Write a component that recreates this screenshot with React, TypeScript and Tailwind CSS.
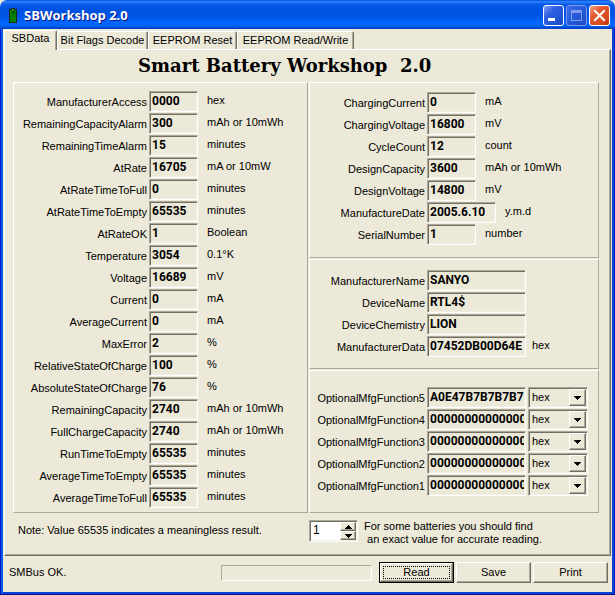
import { useState } from 'react';
import type { ReactNode } from 'react';

interface FieldDef {
  name: string;
  value: string;
  unit?: string;
  size?: 'short' | 'date' | 'long';
}

const measured: FieldDef[] = [
  { name: 'ManufacturerAccess', value: '0000', unit: 'hex' },
  { name: 'RemainingCapacityAlarm', value: '300', unit: 'mAh or 10mWh' },
  { name: 'RemainingTimeAlarm', value: '15', unit: 'minutes' },
  { name: 'AtRate', value: '16705', unit: 'mA or 10mW' },
  { name: 'AtRateTimeToFull', value: '0', unit: 'minutes' },
  { name: 'AtRateTimeToEmpty', value: '65535', unit: 'minutes' },
  { name: 'AtRateOK', value: '1', unit: 'Boolean' },
  { name: 'Temperature', value: '3054', unit: '0.1°K' },
  { name: 'Voltage', value: '16689', unit: 'mV' },
  { name: 'Current', value: '0', unit: 'mA' },
  { name: 'AverageCurrent', value: '0', unit: 'mA' },
  { name: 'MaxError', value: '2', unit: '%' },
  { name: 'RelativeStateOfCharge', value: '100', unit: '%' },
  { name: 'AbsoluteStateOfCharge', value: '76', unit: '%' },
  { name: 'RemainingCapacity', value: '2740', unit: 'mAh or 10mWh' },
  { name: 'FullChargeCapacity', value: '2740', unit: 'mAh or 10mWh' },
  { name: 'RunTimeToEmpty', value: '65535', unit: 'minutes' },
  { name: 'AverageTimeToEmpty', value: '65535', unit: 'minutes' },
  { name: 'AverageTimeToFull', value: '65535', unit: 'minutes' },
];

const design: FieldDef[] = [
  { name: 'ChargingCurrent', value: '0', unit: 'mA' },
  { name: 'ChargingVoltage', value: '16800', unit: 'mV' },
  { name: 'CycleCount', value: '12', unit: 'count' },
  { name: 'DesignCapacity', value: '3600', unit: 'mAh or 10mWh' },
  { name: 'DesignVoltage', value: '14800', unit: 'mV' },
  { name: 'ManufactureDate', value: '2005.6.10', unit: 'y.m.d', size: 'date' },
  { name: 'SerialNumber', value: '1', unit: 'number' },
];

const maker: FieldDef[] = [
  { name: 'ManufacturerName', value: 'SANYO', size: 'long' },
  { name: 'DeviceName', value: 'RTL4$', size: 'long' },
  { name: 'DeviceChemistry', value: 'LION', size: 'long' },
  { name: 'ManufacturerData', value: '07452DB00D64E', unit: 'hex', size: 'long' },
];

const optional: FieldDef[] = [
  { name: 'OptionalMfgFunction5', value: 'A0E47B7B7B7B7', size: 'long' },
  { name: 'OptionalMfgFunction4', value: '00000000000000', size: 'long' },
  { name: 'OptionalMfgFunction3', value: '00000000000000', size: 'long' },
  { name: 'OptionalMfgFunction2', value: '00000000000000', size: 'long' },
  { name: 'OptionalMfgFunction1', value: '00000000000000', size: 'long' },
];

const sunken =
  'border border-t-[#aca899] border-l-[#aca899] border-r-white border-b-white shadow-[inset_1px_1px_0_#716f64,inset_-1px_-1px_0_#f1efe2]';
const raised =
  'border border-t-white border-l-white border-r-[#716f64] border-b-[#716f64] shadow-[inset_-1px_-1px_0_#aca899]';

const widths = { short: 'w-[49px]', date: 'w-[69px]', long: 'w-[99px]' };

function Panel({ className, children }: { className: string; children: ReactNode }) {
  return (
    <section
      className={`border border-t-white border-l-white border-r-[#aca899] border-b-[#aca899] ${className}`}
    >
      {children}
    </section>
  );
}

function Field({ field, labelWidth, children }: { field: FieldDef; labelWidth: string; children?: ReactNode }) {
  return (
    <div className="flex h-[22px] items-start">
      <label htmlFor={field.name} className={`${labelWidth} shrink-0 pt-[5px] text-right`}>
        {field.name}
      </label>
      <input
        id={field.name}
        readOnly
        defaultValue={field.value}
        className={`${sunken} ${widths[field.size ?? 'short']} ml-[2px] h-[21px] shrink-0 bg-[#ece9d8] pr-px pb-[1px] pl-[2px] font-[Roboto,sans-serif] text-[12px] font-bold outline-none`}
      />
      {field.unit && (
        <span className={`whitespace-nowrap pt-[3px] ${field.size === 'long' ? 'pl-[6px]' : 'pl-[9px]'}`}>
          {field.unit}
        </span>
      )}
      {children}
    </div>
  );
}

function FormatSelect({ name }: { name: string }) {
  return (
    <div className="relative ml-[2px] h-[21px] w-[60px]">
      <select
        aria-label={`${name} format`}
        className={`${sunken} h-full w-full appearance-none bg-[#ece9d8] pl-[3px] outline-none`}
      >
        <option>hex</option>
        <option>dec</option>
      </select>
      <span
        className={`${raised} pointer-events-none absolute top-[2px] right-[2px] bottom-[2px] flex w-[17px] items-center justify-center bg-[#ece9d8]`}
      >
        <svg width="7" height="4" viewBox="0 0 7 4" shapeRendering="crispEdges">
          <path d="M0 0h7v1H6v1H5v1H4v1H3V3H2V2H1V1H0z" />
        </svg>
      </span>
    </div>
  );
}

function TitleBar() {
  const button = 'flex h-[21px] w-[21px] items-center justify-center rounded-[3px] border';
  return (
    <header className="flex h-[29px] shrink-0 items-center rounded-t-[7px] bg-[linear-gradient(180deg,#0048d8_0%,#2f86ff_6%,#0a5be8_14%,#0053e1_28%,#0055e5_55%,#0366ff_80%,#0264fb_88%,#0046c8_97%,#003dd7_100%)] pt-[2px] pr-[5px] pl-[9px]">
      <svg width="8" height="15" viewBox="0 0 8 15" shapeRendering="crispEdges">
        <path d="M2 0h4v1h2v14H0V1h2z" fill="#1c2a10" />
        <path d="M1 2h6v12H1z" fill="#008000" />
        <path d="M3 1h2v1H3z" fill="#808080" />
        <path d="M3 4h3v1H3zM4 3h1v3H4z" fill="#004000" />
      </svg>
      <h1 className="ml-[7px] flex-1 font-['Open_Sans',sans-serif] text-[13px] font-bold text-white [text-shadow:1px_1px_#0a1883]">
        SBWorkshop 2.0
      </h1>
      <div className="flex gap-[2px]">
        <button
          aria-label="Minimize"
          className={`${button} border-white bg-[linear-gradient(135deg,#7f9df5,#2e5fe0_35%,#2256d8_70%,#1846b8)]`}
        >
          <svg width="19" height="19" viewBox="0 0 19 19" shapeRendering="crispEdges">
            <path d="M4 12h7v3H4z" fill="#fff" />
          </svg>
        </button>
        <button
          aria-label="Maximize"
          disabled
          className={`${button} border-[#7a98ea] bg-[linear-gradient(135deg,#3f6de6,#2359d8_50%,#1c4ec6)]`}
        >
          <svg width="19" height="19" viewBox="0 0 19 19" shapeRendering="crispEdges">
            <path d="M4 4h11v11H4zM5 7v7h9V7z" fill="#7f9dec" fillRule="evenodd" />
          </svg>
        </button>
        <button
          aria-label="Close"
          className={`${button} border-white bg-[linear-gradient(135deg,#f0a48c,#e25a33_35%,#dc4a20_70%,#b8330f)]`}
        >
          <svg width="19" height="19" viewBox="0 0 19 19">
            <path d="M5 5l9 9M14 5l-9 9" stroke="#fff" strokeWidth="2" strokeLinecap="square" />
          </svg>
        </button>
      </div>
    </header>
  );
}

const tabs = [
  { title: 'SBData', width: 'w-[53px]' },
  { title: 'Bit Flags Decode', width: 'w-[91px]' },
  { title: 'EEPROM Reset', width: 'w-[89px]' },
  { title: 'EEPROM Read/Write', width: 'w-[117px]' },
];

function Tabs() {
  return (
    <div role="tablist" className="flex h-[19px] shrink-0 items-end">
      {tabs.map((tab, i) => (
        <button
          key={tab.title}
          role="tab"
          aria-selected={i === 0}
          className={`${tab.width} shrink-0 rounded-t-[2px] border-t border-r border-l border-t-white border-r-[#716f64] border-l-white bg-[#ece9d8] text-center whitespace-nowrap shadow-[inset_-1px_0_0_#aca899] ${
            i === 0 ? 'relative z-10 -mb-px h-[20px] pb-1' : 'h-[18px]'
          }`}
        >
          {tab.title}
        </button>
      ))}
    </div>
  );
}

function Spinner() {
  const [cell, setCell] = useState(1);
  const step = 'flex h-[9px] w-[16px] items-center justify-center bg-[#ece9d8]';
  return (
    <div className={`${sunken} flex h-[22px] w-[49px] shrink-0 justify-between bg-white p-px`}>
      <input
        aria-label="Battery number"
        value={cell}
        onChange={(e) => setCell(Number(e.target.value) || 0)}
        className="h-[15px] w-[26px] pl-[2px] text-[12px] outline-none"
      />
      <div className="flex flex-col">
        <button aria-label="Increase" onClick={() => setCell(cell + 1)} className={`${raised} ${step}`}>
          <svg width="7" height="4" viewBox="0 0 7 4" shapeRendering="crispEdges">
            <path d="M3 0h1v1h1v1h1v1h1v1H0V3h1V2h1V1h1z" />
          </svg>
        </button>
        <button aria-label="Decrease" onClick={() => setCell(Math.max(0, cell - 1))} className={`${raised} ${step}`}>
          <svg width="7" height="4" viewBox="0 0 7 4" shapeRendering="crispEdges">
            <path d="M0 0h7v1H6v1H5v1H4v1H3V3H2V2H1V1H0z" />
          </svg>
        </button>
      </div>
    </div>
  );
}

export default function App() {
  return (
    <div className="flex min-h-screen flex-col bg-[#ece9d8] font-['Liberation_Sans',Arial,sans-serif] text-[11px] leading-[13px] text-black">
      <TitleBar />
      <div className="flex flex-1 flex-col border-x border-b border-x-[#0019cf] border-b-[#00138c] px-[3px] pt-px pb-[2px] shadow-[inset_2px_0_0_#0a5be8,inset_-2px_0_0_#0842d0,inset_0_-2px_0_#0842d0]">
        <Tabs />
        <main className="flex flex-1 flex-col border border-t-white border-r-[#716f64] border-b-[#716f64] border-l-white pr-[11px] pl-2 shadow-[inset_-1px_-1px_0_#aca899]">
          <h2 className="h-[32px] pt-1 pl-[125px] font-['DejaVu_Serif',serif] text-[18px] leading-[24px] font-bold whitespace-pre">
            Smart Battery Workshop  2.0
          </h2>
          <div className="flex gap-px">
            <Panel className="w-[295px] shrink-0 pt-2 pb-[3px]">
              {measured.map((f) => (
                <Field key={f.name} field={f} labelWidth="w-[133px]" />
              ))}
            </Panel>
            <div className="flex min-w-0 flex-1 flex-col gap-px">
              <Panel className="h-[176px] pt-[9px]">
                {design.map((f) => (
                  <Field key={f.name} field={f} labelWidth="w-[115px]" />
                ))}
              </Panel>
              <Panel className="h-[110px] pt-[10px]">
                {maker.map((f) => (
                  <Field key={f.name} field={f} labelWidth="w-[115px]" />
                ))}
              </Panel>
              <Panel className="flex-1 pt-4">
                {optional.map((f) => (
                  <Field key={f.name} field={f} labelWidth="w-[115px]">
                    <FormatSelect name={f.name} />
                  </Field>
                ))}
              </Panel>
            </div>
          </div>
          <div className="flex flex-1 items-start pt-[7px]">
            <p className="w-[296px] shrink-0 pt-1 pl-[5px]">Note: Value 65535 indicates a meaningless result.</p>
            <Spinner />
            <p className="pl-[6px] whitespace-pre">{'For some batteries you should find\n an exact value for accurate reading.'}</p>
          </div>
        </main>
        <footer className="flex h-[36px] shrink-0 items-center pr-[3px] pb-[3px] pl-[5px]">
          <span role="status" className="w-[212px] shrink-0">SMBus OK.</span>
          <div
            role="progressbar"
            aria-label="Read progress"
            className="h-4 flex-1 border border-t-[#aca899] border-r-white border-b-white border-l-[#aca899]"
          />
          <div className="ml-[7px] flex gap-[2px]">
            <button className="h-[21px] w-[75px] border border-black p-0">
              <span className={`${raised} flex h-full p-[2px]`}>
                <span className="flex flex-1 items-center justify-center border border-dotted border-black">Read</span>
              </span>
            </button>
            <button className={`${raised} h-[21px] w-[75px]`}>Save</button>
            <button className={`${raised} h-[21px] w-[75px]`}>Print</button>
          </div>
        </footer>
      </div>
    </div>
  );
}
